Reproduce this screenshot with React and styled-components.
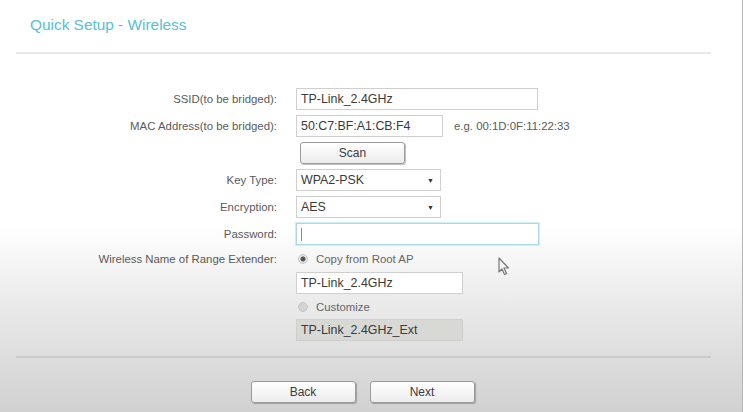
import React from "react";
import styled, { createGlobalStyle } from "styled-components";

const Global = createGlobalStyle`
  html, body { margin: 0; padding: 0; }
  body { font-family: "Liberation Sans", Arial, sans-serif; }
`;

const Page = styled.div`
  position: relative;
  width: 742px;
  height: 412px;
  border-right: 1px solid #b5b5b5;
  background: linear-gradient(to bottom, #ffffff 0%, #ffffff 55%, #ececec 72%, #dcdcdc 88%, #d1d1d1 100%);
  overflow: hidden;
  display: flex;
  flex-direction: column;
`;

const Title = styled.h1`
  margin: 0;
  padding: 15px 0 0 30px;
  height: 20px;
  font-size: 15.4px;
  font-weight: normal;
  color: #56c1d4;
  line-height: 20px;
`;

const Divider = styled.div`
  height: 2px;
  margin: ${(p) => p.$top || 0}px 31px 0 16px;
  background: ${(p) => p.$color || "#e8e8e8"};
`;

const Form = styled.div`
  display: grid;
  grid-template-columns: 277px 1fr;
  column-gap: 19px;
  row-gap: 5px;
  margin-top: 34px;
  align-items: center;
`;

const Label = styled.div`
  text-align: right;
  font-size: 11.4px;
  color: #5a5a5a;
`;

const Field = styled.div`
  display: flex;
  align-items: center;
  gap: 11px;
  min-height: ${(p) => p.$h || 22}px;
`;

const Input = styled.div`
  box-sizing: border-box;
  width: ${(p) => p.$w}px;
  height: 22px;
  border: 1px solid ${(p) => (p.$focus ? "#a8dbe5" : "#cfcfcf")};
  box-shadow: ${(p) => (p.$focus ? "0 0 0 1px #cdeef3" : "none")};
  background: ${(p) => (p.$disabled ? "#d8d8d4" : "#ffffff")};
  font-size: 12.4px;
  color: #3a3a3a;
  padding-left: 4px;
  display: flex;
  align-items: center;
`;

const Caret = styled.span`
  width: 1px;
  height: 13px;
  background: #8a8a8a;
`;

const Select = styled(Input)`
  justify-content: space-between;
  padding-right: 6px;
`;

const Arrow = styled.span`
  font-size: 7px;
  color: #333;
`;

const Hint = styled.span`
  font-size: 11.4px;
  color: #5a5a5a;
`;

const Button = styled.button`
  box-sizing: border-box;
  width: ${(p) => p.$w}px;
  height: 22px;
  margin-left: ${(p) => p.$ml || 0}px;
  border: 1px solid #9a9a9a;
  border-radius: 3px;
  background: linear-gradient(to bottom, #ffffff, #ececec);
  box-shadow: 1px 1px 1px rgba(0, 0, 0, 0.25);
  font-family: "Liberation Sans", Arial, sans-serif;
  font-size: 12px;
  color: #3a3a3a;
  padding: 0;
`;

const Radio = styled.label`
  display: flex;
  align-items: center;
  gap: 8px;
  font-size: 11.4px;
  color: #666;
  padding-left: 2px;
`;

const Dot = styled.span`
  box-sizing: border-box;
  width: 10px;
  height: 10px;
  border-radius: 50%;
  border: 1px solid #c8c8c8;
  background: ${(p) => (p.$on ? "radial-gradient(circle, #555 0, #555 2px, #e6e6e6 3px)" : "#d4d4d4")};
`;

const Footer = styled.div`
  display: flex;
  justify-content: center;
  gap: 14px;
  margin: 23px 31px 0 16px;
  padding-right: 2px;
`;

const Cursor = styled.svg`
  position: absolute;
  left: 497px;
  top: 257px;
`;

export default function App() {
  return (
    <>
      <Global />
      <Page>
        <Title>Quick Setup - Wireless</Title>
        <Divider $top={17} />
        <Form>
          <Label>SSID(to be bridged):</Label>
          <Field>
            <Input $w={242}>TP-Link_2.4GHz</Input>
          </Field>

          <Label>MAC Address(to be bridged):</Label>
          <Field>
            <Input $w={147}>50:C7:BF:A1:CB:F4</Input>
            <Hint>e.g. 00:1D:0F:11:22:33</Hint>
          </Field>

          <div />
          <Field>
            <Button $w={105} $ml={4}>Scan</Button>
          </Field>

          <Label>Key Type:</Label>
          <Field>
            <Select $w={145}>
              WPA2-PSK<Arrow>▼</Arrow>
            </Select>
          </Field>

          <Label>Encryption:</Label>
          <Field>
            <Select $w={145}>
              AES<Arrow>▼</Arrow>
            </Select>
          </Field>

          <Label>Password:</Label>
          <Field>
            <Input $w={243} $focus>
              <Caret />
            </Input>
          </Field>

          <Label>Wireless Name of Range Extender:</Label>
          <Field $h={17}>
            <Radio>
              <Dot $on />
              Copy from Root AP
            </Radio>
          </Field>

          <div />
          <Field>
            <Input $w={167}>TP-Link_2.4GHz</Input>
          </Field>

          <div />
          <Field $h={15}>
            <Radio>
              <Dot />
              Customize
            </Radio>
          </Field>

          <div />
          <Field>
            <Input $w={167} $disabled>TP-Link_2.4GHz_Ext</Input>
          </Field>
        </Form>
        <Divider $top={15} $color="#cbcbcb" />
        <Footer>
          <Button $w={105}>Back</Button>
          <Button $w={105}>Next</Button>
        </Footer>
        <Cursor width="16" height="20" viewBox="0 0 16 20">
          <path
            d="M2 1 L2 15 L5 12 L7.5 17.5 L9.5 16.5 L7 11 L11.5 11 Z"
            fill="#f4f4f4"
            stroke="#777"
            strokeWidth="1.2"
            strokeLinejoin="round"
          />
        </Cursor>
      </Page>
    </>
  );
}
